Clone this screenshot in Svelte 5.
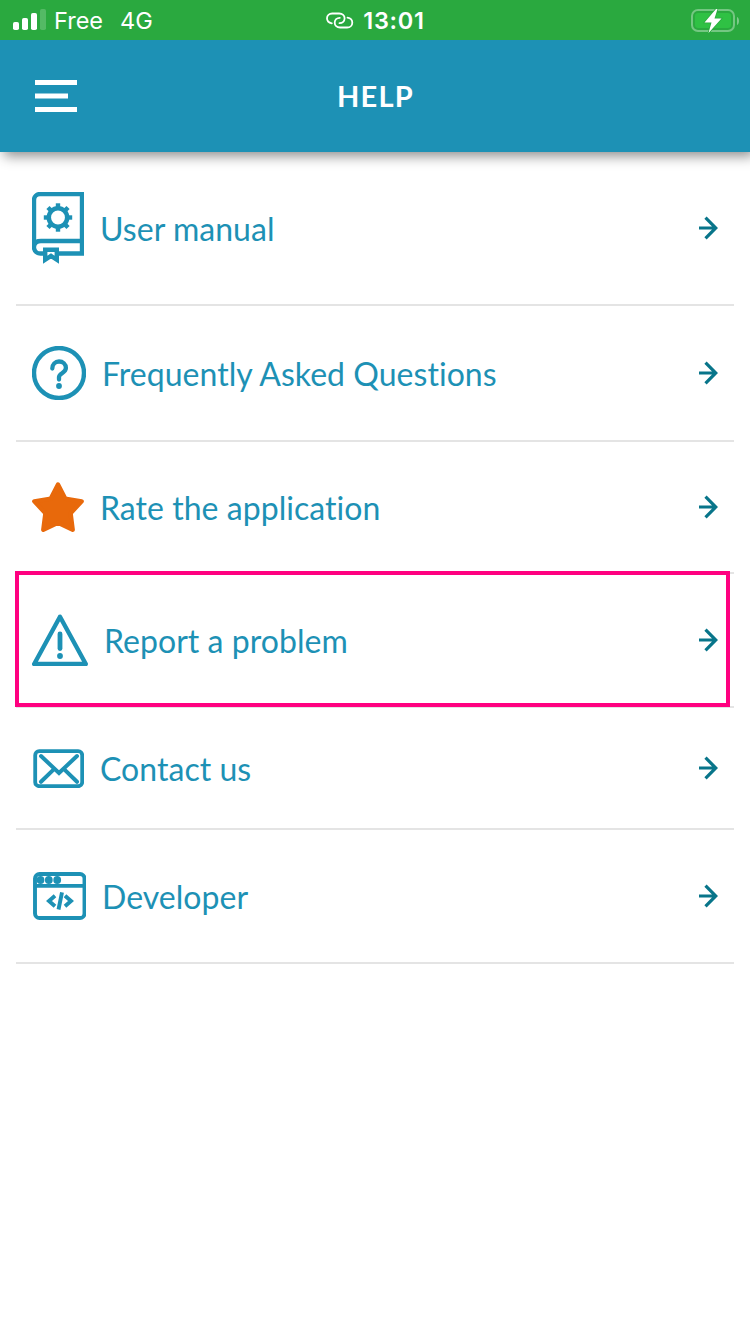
<script>
  const items = [
    { id: 'manual', label: 'User manual', w: 52, h: 72 },
    { id: 'faq', label: 'Frequently Asked Questions', w: 54, h: 54 },
    { id: 'rate', label: 'Rate the application', w: 52, h: 50 },
    { id: 'report', label: 'Report a problem', w: 56, h: 52, highlighted: true },
    { id: 'contact', label: 'Contact us', w: 52, h: 40 },
    { id: 'developer', label: 'Developer', w: 54, h: 52 }
  ];
  const teeth = [0, 45, 90, 135, 180, 225, 270, 315];
</script>

<div class="screen">
  <div class="status">
    <div class="carrier">
      <svg width="34" height="22" viewBox="0 0 34 22" fill="#fff">
        <rect x="0" y="13" width="6" height="8" rx="1.8" />
        <rect x="9" y="9" width="6" height="12" rx="1.8" />
        <rect x="18" y="4" width="6" height="17" rx="1.8" />
        <rect x="27" y="0" width="6" height="21" rx="1.8" opacity=".2" />
      </svg>
      <span class="name">Free</span>
      <span>4G</span>
    </div>
    <div class="clock">
      <svg width="28" height="18" viewBox="0 0 28 18" fill="none" stroke="#fff" stroke-width="1.8" stroke-linecap="round">
        <path d="M5.800 11.300C2.800 10.800 1 8.800 1 6.300 1 3.500 3.200 1.500 6.200 1.500h7c3.300 0 5.400 2 5.400 4.700 0 2.800-2.100 5-5.100 5" />
        <path d="M21.500 5.700c3 .5 4.800 2.500 4.800 5 0 2.800-2.200 4.800-5.200 4.800h-7c-3.300 0-5.400-2-5.400-4.700 0-2.800 2.100-5 5.100-5" />
      </svg>
      <span>13:01</span>
    </div>
    <svg class="battery" width="50" height="26" viewBox="0 0 50 26">
      <rect x="3" y="2" width="42" height="21" rx="6" fill="none" stroke="#fff" stroke-opacity=".35" stroke-width="2" />
      <rect x="6" y="5" width="36" height="15" rx="3.200" fill="#2fc144" />
      <path d="M48 9c1.300.6 2 2.100 2 4s-.7 3.400-2 4z" fill="#fff" opacity=".4" />
      <path d="M27 1 15.500 14.500h7L19.500 25 32.500 10.500h-7L28.500 1z" fill="#fff" stroke="#2aab3f" stroke-width="1.500" paint-order="stroke" />
    </svg>
  </div>

  <header>
    <svg width="42" height="32" viewBox="0 0 42 32" fill="#fff">
      <rect width="42" height="5" />
      <rect y="13.500" width="33" height="5" />
      <rect y="27" width="42" height="5" />
    </svg>
    <h1>HELP</h1>
  </header>

  <ul>
    {#each items as item}
      <li class:highlighted={item.highlighted}>
        <svg class="icon" width={item.w} height={item.h} viewBox="0 0 {item.w} {item.h}">
          {#if item.id === 'manual'}
            <path d="M2 57V8a6 6 0 0 1 6-6h42v59.500H27M12 61.500H8.500A6.500 6.500 0 0 1 2 56v-1q0-6 7-6h41" />
            <path d="M13.200 57.800h11.600v10l-5.800-3.800-5.800 3.800z" />
            <circle cx="26" cy="25.500" r="9.200" stroke-width="4.500" />
            {#each teeth as angle}
              <path d="M23.800 15.800v-4.500h4.400v4.500z" class="solid" transform="rotate({angle} 26 25.500)" />
            {/each}
          {:else if item.id === 'faq'}
            <circle cx="27" cy="27" r="25" />
            <path d="M20.300 22.500c0-4.200 2.900-7 6.700-7s6.900 2.600 6.900 6.500c0 5-6.900 5.200-6.900 9v2.500" stroke-width="4.300" stroke-linecap="round" />
            <circle cx="27" cy="40" r="2.900" class="solid" />
          {:else if item.id === 'rate'}
            <path class="star" d="M26 2.500 33.200 16.600 49.700 19.300 38.600 31.200 40.700 47.700 26 40.700 11.300 47.700 13.400 31.200 2.300 19.300 18.800 16.600Z" />
          {:else if item.id === 'report'}
            <path d="M28 2.800 2.200 50h51.600z" stroke-linejoin="round" />
            <path d="M28 20v14.500" stroke-width="4.800" stroke-linecap="round" />
            <circle cx="28" cy="42" r="2.900" class="solid" />
          {:else if item.id === 'contact'}
            <rect x="3.200" y="3.200" width="47" height="35" rx="4" stroke-width="3.800" />
            <path d="m9 8 18 17L45 8M9 33.800l12.500-12.200M45 33.800 32.500 21.600" stroke-width="4" stroke-linecap="round" />
          {:else}
            <rect x="3" y="4" width="49.500" height="44" rx="4.500" stroke-width="3.900" />
            <path d="M3 15.800h49" stroke-width="3.700" />
            <circle cx="8.500" cy="10" r="3.900" class="solid" />
            <circle cx="16.800" cy="10" r="3.900" class="solid" />
            <circle cx="25.200" cy="10" r="3.900" class="solid" />
            <path d="m23 25.800-6 5.200 6 5.200M33 25.800l6 5.200-6 5.200M30 22.300 26.500 39.500" stroke-width="3.900" />
          {/if}
        </svg>
        <span class="label">{item.label}</span>
        <svg class="arrow" width="20" height="24" viewBox="0 0 20 24">
          <path d="M1 12h17M7.500 1.700 17.800 12 7.500 22.300" />
        </svg>
      </li>
    {/each}
  </ul>
</div>

<style>
  :global(body) {
    background: #fff;
  }
  .screen {
    width: 750px;
    height: 1334px;
    overflow: hidden;
    background: #fff;
    font-family: Lato, sans-serif;
  }
  svg {
    display: block;
    flex: none;
  }
  .status {
    position: relative;
    z-index: 1;
    box-sizing: border-box;
    height: 40px;
    padding: 0 11px 0 13px;
    display: grid;
    grid-template-columns: 1fr auto 1fr;
    align-items: center;
    background: #2aa93f;
    color: #fff;
    font: 400 23.500px/40px Inter, sans-serif;
  }
  .status span {
    padding-top: 1px;
  }
  .carrier,
  .clock {
    display: flex;
    align-items: center;
  }
  .carrier svg {
    margin-top: -1px;
  }
  .name {
    margin: 0 17px 0 7px;
  }
  .clock {
    gap: 9px;
    margin-right: 1px;
    font-weight: 600;
    letter-spacing: 0.7px;
  }
  .battery {
    justify-self: end;
  }
  header {
    box-sizing: border-box;
    height: 112px;
    padding: 0 35px;
    display: grid;
    grid-template-columns: 1fr auto 1fr;
    align-items: center;
    background: #1d91b5;
    box-shadow: 4px 4px 12px rgba(0, 0, 0, 0.45);
  }
  h1 {
    margin: 0 0 0 1px;
    color: #fff;
    font-size: 29px;
    font-weight: 700;
    line-height: 36px;
    letter-spacing: 1.300px;
  }
  ul {
    margin: 0;
    padding: 0 16px;
    list-style: none;
  }
  li {
    position: relative;
    display: flex;
    align-items: center;
    padding: 40px 16px;
    border-bottom: 2px solid #e4e4e4;
  }
  .highlighted::after {
    content: '';
    position: absolute;
    inset: -3px 4px -1px -1px;
    border: 4px solid #ff0080;
  }
  .icon {
    fill: none;
    stroke: #1d91b5;
    stroke-width: 4.400;
  }
  .icon .solid {
    fill: #1d91b5;
    stroke: none;
  }
  .icon .star {
    fill: #e8690b;
    stroke: #e8690b;
    stroke-linejoin: round;
  }
  .label {
    flex: 1;
    margin: 1px 0 -1px 16px;
    color: #1d91b5;
    font-size: 32px;
    line-height: 40px;
    letter-spacing: 0.040px;
    font-variant-ligatures: none;
  }
  .arrow {
    fill: none;
    stroke: #08758a;
    stroke-width: 3.200;
  }
</style>
